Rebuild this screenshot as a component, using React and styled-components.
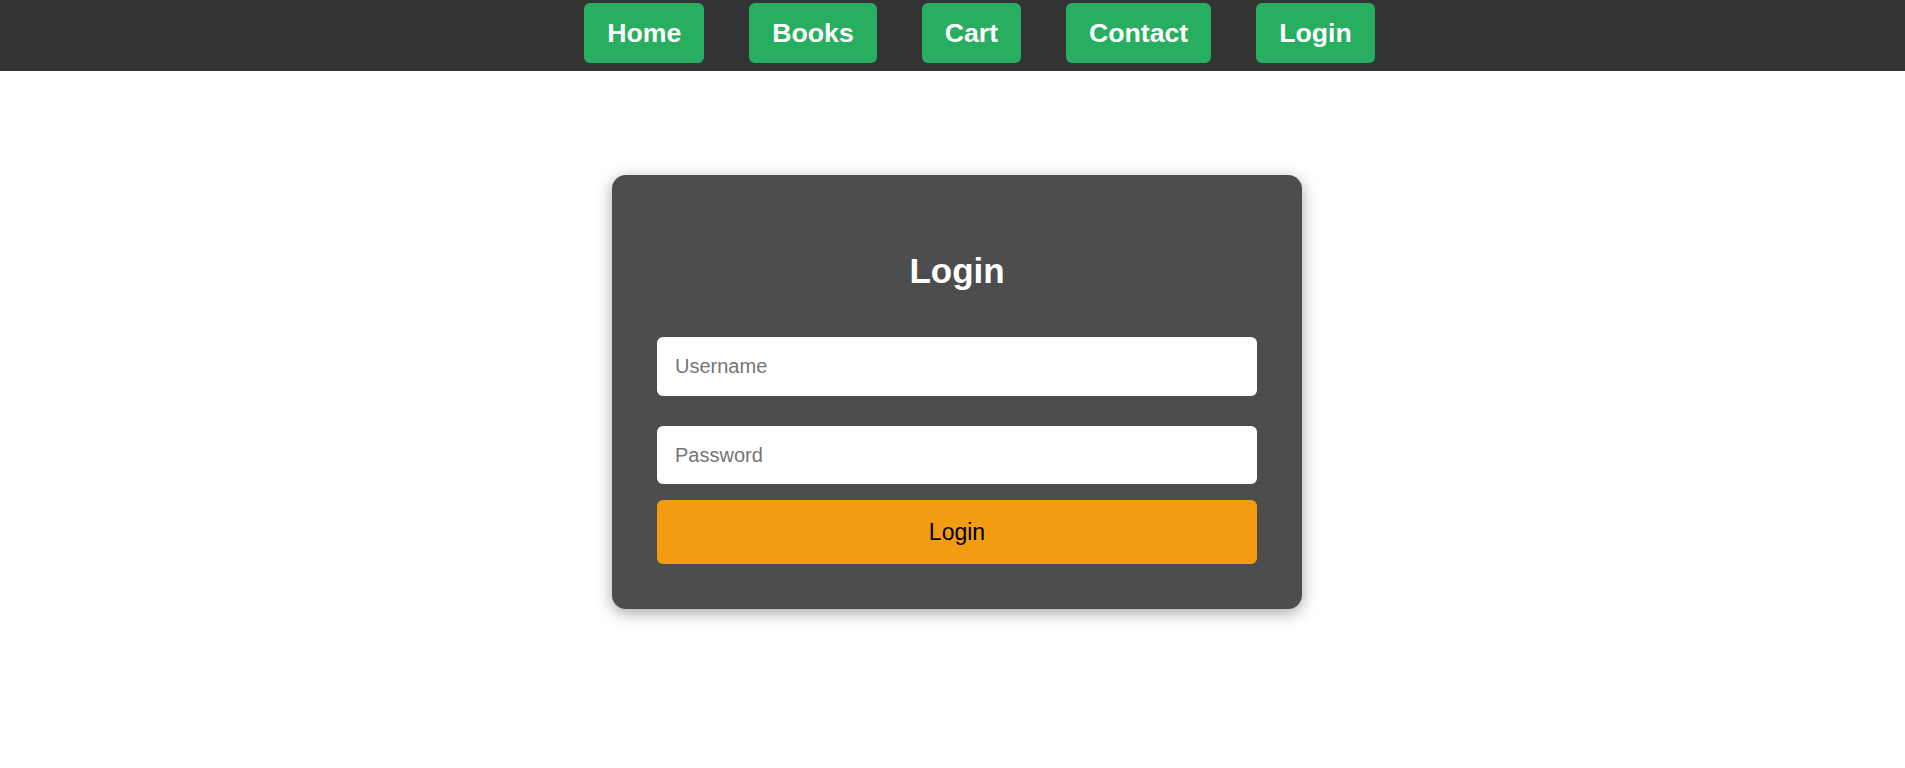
import React from "react";
import styled, { createGlobalStyle } from "styled-components";

const GlobalStyle = createGlobalStyle`
  * { box-sizing: border-box; }
  html, body {
    margin: 0;
    padding: 0;
    background: #ffffff;
    font-family: "Liberation Sans", Arial, sans-serif;
  }
`;

const NavBar = styled.nav`
  height: 71px;
  background: #333333;
  display: flex;
  justify-content: center;
  align-items: flex-start;
  padding: 3px 0 0 54px;
  gap: 45px;
`;

const NavButton = styled.a`
  height: 60px;
  padding: 0 23px;
  display: flex;
  align-items: center;
  background: #27ae60;
  color: #ffffff;
  font-weight: 700;
  font-size: 26.67px;
  text-decoration: none;
  border-radius: 6px;
  white-space: nowrap;
`;

const Main = styled.main`
  display: flex;
  justify-content: center;
  padding: 104px 0 80px 9px;
`;

const Card = styled.form`
  width: 690px;
  background: #4d4d4d;
  border-radius: 14px;
  padding: 45px;
  box-shadow: 0 4px 16px rgba(0, 0, 0, 0.35);
  display: flex;
  flex-direction: column;
`;

const Title = styled.h2`
  margin: 31px 0 46px;
  color: #ffffff;
  font-size: 35px;
  font-weight: 700;
  text-align: center;
  line-height: 40px;
`;

const Input = styled.input`
  width: 100%;
  height: ${(p) => p.$h}px;
  margin-bottom: ${(p) => p.$mb}px;
  border: none;
  outline: none;
  border-radius: 6px;
  padding: 0 18px;
  font-family: "Liberation Sans", Arial, sans-serif;
  font-size: 20px;
  color: #222;
  background: #ffffff;
  &::placeholder { color: #757575; }
`;

const SubmitButton = styled.button`
  width: 100%;
  height: 64px;
  border: none;
  border-radius: 6px;
  background: #f39c12;
  color: #000000;
  font-family: "Liberation Sans", Arial, sans-serif;
  font-size: 23px;
  cursor: pointer;
`;

const links = ["Home", "Books", "Cart", "Contact", "Login"];

export default function App() {
  return (
    <>
      <GlobalStyle />
      <NavBar>
        {links.map((l) => (
          <NavButton key={l} href="#">
            {l}
          </NavButton>
        ))}
      </NavBar>
      <Main>
        <Card onSubmit={(e) => e.preventDefault()}>
          <Title>Login</Title>
          <Input type="text" placeholder="Username" $h={59} $mb={30} />
          <Input type="password" placeholder="Password" $h={58} $mb={16} />
          <SubmitButton type="submit">Login</SubmitButton>
        </Card>
      </Main>
    </>
  );
}
